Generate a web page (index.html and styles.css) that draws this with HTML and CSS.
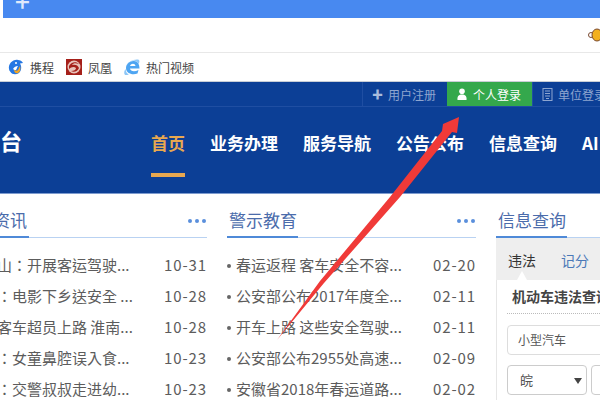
FILE: index.html
```html
<!DOCTYPE html>
<html lang="zh-CN">
<head>
  <meta charset="UTF-8" />
  <title>个人登录</title>
  <link rel="stylesheet" href="styles.css">
</head>
<body>

  <div class="browser-bar"><span class="new-tab">+</span></div>

  <div class="toolbar">
    <svg class="bee" width="12" height="16" viewBox="0 0 12 16">
      <circle cx="3" cy="8" r="2.5" fill="#fff" stroke="#7a4a30" stroke-width="1"/>
      <ellipse cx="9" cy="8" rx="5" ry="6" fill="#f2b01e" stroke="#7a4a30" stroke-width="1"/>
    </svg>
  </div>

  <div class="bookmarks">
    <a class="bookmark">
      <svg width="16" height="16" viewBox="0 0 16 16">
        <path d="M1 10C0 5 5 0 10 1c2 0 4 1 5 3l-3 .5c2 3 1.500 7-1 9.500-3 2-7 1.500-8.500-1C1.500 12 1 11 1 10z" fill="#2577e3"/>
        <path d="M6 10c1 2 3 2 4 1l2-4c1 3 0 6-2 7-2 1-4 0-4-4z" fill="#f5a623"/>
        <path d="M5 10c1-2 3-3 5-3-1 1-1 3-2 4-1 0-2 0-3-1z" fill="#fff"/>
        <circle cx="8" cy="4" r="1" fill="#fff"/>
      </svg>
      携程
    </a>
    <a class="bookmark">
      <svg width="16" height="16" viewBox="0 0 16 16">
        <rect width="16" height="16" fill="#a5201a"/>
        <circle cx="8" cy="8" r="6.500" fill="#e9c4bb"/>
        <path d="M3 7c2-4 7-5 10-2-3-1-6-1-7 1 3-1 6 0 7 3-1 3-5 5-8 3 3 0 5-1 5-3-2-2-5-1-7 1z" fill="#a5201a"/>
      </svg>
      凤凰
    </a>
    <a class="bookmark">
      <svg width="16" height="16" viewBox="0 0 16 16">
        <path d="M15.500 9.500H6c.5 3 4.500 3.500 8.500 1.500l-1 3.500c-5 2-11.500 0-11.500-5.500C2 5 6 1.500 10 2c3.500 0 5.500 3 5.500 7.500zM6 7h5.500c-.5-3-4.500-3-5.500 0z" fill="#4ea5f2"/>
        <path d="M2 7C4 3 9 0 14 .5c2 .5 1.500 3 .5 4.500-1-2-3-3.500-5-3.500C6.500 1.500 4 4 2 7zM1.500 10c-2 3-1.500 6 .5 6 1 0 2 0 3-1-2 0-3-2-3.500-5z" fill="#8cc6f7"/>
      </svg>
      热门视频
    </a>
  </div>

  <header class="site-header">
    <div class="top-links">
      <a class="top-link"><span class="top-icon">✚</span>用户注册</a>
      <a class="top-link active">
        <svg width="12" height="12" viewBox="0 0 12 12"><circle cx="6" cy="3.200" r="2.800" fill="#fff"/><path d="M1.500 12c-.5-4 1.500-5.500 4.500-5.500s5 1.500 4.500 5.500z" fill="#fff"/></svg>
        个人登录
      </a>
      <a class="top-link">
        <svg width="11" height="13" viewBox="0 0 11 13"><rect x="1" y=".5" width="9" height="12" fill="none" stroke="#8ea6d0"/><path d="M3 3h5M3 5.500h5M3 8h5M4 10.500h3" stroke="#8ea6d0"/></svg>
        单位登录
      </a>
    </div>
    <div class="main-row">
      <div class="logo">台</div>
      <nav class="main-nav">
        <a class="nav-item current">首页</a>
        <a class="nav-item">业务办理</a>
        <a class="nav-item">服务导航</a>
        <a class="nav-item">公告公布</a>
        <a class="nav-item">信息查询</a>
        <a class="nav-item">AI</a>
      </nav>
    </div>
  </header>

  <main class="content">
    <section class="news-col first">
      <div class="col-title"><h3><span>资讯</span></h3><span class="more"><i></i><i></i><i></i></span></div>
      <ul class="news-list" lang="zh-TW">
        <li><span class="news-text">山：开展客运驾驶...</span><span class="news-date">10-31</span></li>
        <li><span class="news-text">：电影下乡送安全 ...</span><span class="news-date">10-28</span></li>
        <li><span class="news-text">客车超员上路 淮南...</span><span class="news-date">10-28</span></li>
        <li><span class="news-text">：女童鼻腔误入食...</span><span class="news-date">10-23</span></li>
        <li><span class="news-text">：交警叔叔走进幼...</span><span class="news-date">10-23</span></li>
      </ul>
    </section>

    <section class="news-col second">
      <div class="col-title"><h3>警示教育</h3><span class="more"><i></i><i></i><i></i></span></div>
      <ul class="news-list">
        <li><span class="news-text"><b></b>春运返程 客车安全不容...</span><span class="news-date">02-20</span></li>
        <li><span class="news-text"><b></b>公安部公布2017年度全...</span><span class="news-date">02-11</span></li>
        <li><span class="news-text"><b></b>开车上路 这些安全驾驶...</span><span class="news-date">02-11</span></li>
        <li><span class="news-text"><b></b>公安部公布2955处高速...</span><span class="news-date">02-09</span></li>
        <li><span class="news-text"><b></b>安徽省2018年春运道路...</span><span class="news-date">02-02</span></li>
      </ul>
    </section>

    <section class="query-col">
      <div class="col-title"><h3>信息查询</h3></div>
      <div class="query-tabs">
        <span class="query-tab current">违法</span>
        <span class="query-tab">记分</span>
      </div>
      <div class="query-panel">
        <div class="query-heading">机动车违法查询</div>
        <div class="field">小型汽车</div>
        <div class="field-row">
          <div class="field small">皖<span class="caret"></span></div>
          <div class="field rest"></div>
        </div>
      </div>
    </section>
  </main>

  <svg class="arrow" width="600" height="400" viewBox="0 0 600 400">
    <polygon points="277,340 320,281 390,197 442,131 443,124 459,117 457,133 452,132 400,197 324,283" fill="#f03a38"/>
  </svg>

</body>
</html>
```

FILE: styles.css
```css
* {
  margin: 0;
  padding: 0;
  box-sizing: border-box;
}

body {
  width: 600px;
  height: 400px;
  overflow: hidden;
  background: #fff;
  font-family: "Noto Sans CJK SC", sans-serif;
  color: #5c5c5c;
}

ul {
  list-style: none;
}

.browser-bar {
  height: 18px;
  margin-left: 3px;
  background: #4889f0;
  color: #dfe9fb;
  overflow: hidden;
}

.new-tab {
  display: block;
  margin: -12px 0 0 12px;
  font-size: 26px;
  line-height: 26px;
  font-weight: 500;
}

.toolbar {
  height: 35px;
  border-bottom: 1px solid #e8e8e8;
  display: flex;
  justify-content: flex-end;
  align-items: center;
}

.bookmarks {
  height: 29px;
  border-bottom: 1px solid #c9ced6;
  display: flex;
  align-items: center;
  padding-left: 8px;
  gap: 12px;
  font-size: 12px;
  color: #444;
}

.bookmark {
  display: flex;
  align-items: center;
  gap: 6px;
}

.site-header {
  height: 112px;
  background: #0c3f96;
  border-bottom: 1px solid #7d9bcf;
}

.top-links {
  height: 25px;
  border-bottom: 1px solid #1f4ea2;
  display: flex;
  padding-left: 362px;
}

.top-link {
  width: 85px;
  flex-shrink: 0;
  display: flex;
  align-items: center;
  gap: 5px;
  padding-left: 9px;
  font-size: 12px;
  color: #8ea6d0;
  border-left: 1px solid #1f4ea2;
}

.top-icon {
  font-size: 11px;
  color: #a9bcdd;
}

.top-link.active {
  background: #34a84c;
  color: #fff;
  border-left: none;
}

.main-row {
  height: 86px;
  display: flex;
  color: #fff;
}

.logo {
  width: 151px;
  flex-shrink: 0;
  font-size: 22px;
  font-weight: 700;
  line-height: 26px;
  padding-top: 20px;
}

.main-nav {
  display: flex;
  gap: 25px;
}

.nav-item {
  height: 70px;
  padding-top: 24px;
  font-size: 17px;
  line-height: 24px;
  font-weight: 700;
  white-space: nowrap;
  color: #fff;
}

.nav-item.current {
  color: #e8a850;
  border-bottom: 4px solid #e8a850;
}

.content {
  display: flex;
  gap: 20px;
  padding-top: 14px;
}

.news-col.first {
  width: 207px;
}

.news-col.second {
  width: 249px;
}

.query-col {
  flex: 1;
  min-width: 0;
}

.col-title {
  height: 30px;
  display: flex;
  justify-content: space-between;
  border-bottom: 1px solid #b9d2f2;
}

.col-title h3 {
  width: 71px;
  height: 30px;
  padding-left: 2px;
  font-size: 17px;
  line-height: 24px;
  font-weight: 400;
  white-space: nowrap;
  color: #4b6cab;
  border-bottom: 2px solid #4f8ad8;
}

.first .col-title h3 {
  width: 29px;
  padding-left: 0;
  display: flex;
  justify-content: flex-end;
}

.first .col-title h3 span {
  flex-shrink: 0;
  margin-right: 2px;
}

.more {
  display: flex;
  gap: 3px;
  padding: 11px 1px 0 0;
}

.more i {
  width: 4px;
  height: 4px;
  border-radius: 50%;
  background: #5a8fdc;
}

.news-list {
  padding-top: 11px;
}

.news-list li {
  height: 31px;
  display: flex;
  align-items: center;
  justify-content: space-between;
  font-size: 15px;
  white-space: nowrap;
}

.first .news-text {
  margin-left: -3px;
  font-family: "Noto Sans CJK TC", sans-serif;
}

.news-text b {
  display: inline-block;
  width: 4px;
  height: 4px;
  margin: 0 5px 3px 0;
  border-radius: 50%;
  background: #666;
}

.news-date {
  letter-spacing: 0.9px;
}

.query-tabs {
  height: 42px;
  background: #eee;
  display: flex;
  gap: 25px;
  padding: 12px 0 0 12px;
  font-size: 14px;
  line-height: 20px;
}

.query-tab {
  color: #4b79b8;
  flex-shrink: 0;
}

.query-tab.current {
  color: #333;
  position: relative;
}

.query-tab.current::after {
  content: "";
  position: absolute;
  left: 9px;
  top: 21px;
  border: 5px solid transparent;
  border-top: 0;
  border-bottom: 9px solid #fff;
}

.query-panel {
  border-left: 1px solid #e6e6e6;
  padding-left: 10px;
  width: 130px;
}

.query-heading {
  height: 34px;
  line-height: 33px;
  padding-left: 5px;
  font-size: 14px;
  font-weight: 700;
  white-space: nowrap;
  border-bottom: 1px dotted #bbb;
  margin-bottom: 11px;
  color: #444;
}

.field {
  height: 30px;
  border: 1px solid #ddd;
  border-radius: 4px;
  font-size: 12px;
  line-height: 28px;
  padding-left: 10px;
  color: #555;
  margin-bottom: 10px;
}

.field-row {
  display: flex;
  gap: 4px;
}

.field.small {
  width: 80px;
  flex-shrink: 0;
  padding-left: 12px;
  position: relative;
  font-size: 13px;
  border-color: #ccc;
}

.caret {
  position: absolute;
  right: 4px;
  top: 12px;
  border: 4px solid transparent;
  border-bottom: 0;
  border-top: 6px solid #444;
}

.field.rest {
  flex: 1;
  border-color: #ccc;
}

.arrow {
  position: absolute;
  left: 0;
  top: 0;
  pointer-events: none;
}
```
